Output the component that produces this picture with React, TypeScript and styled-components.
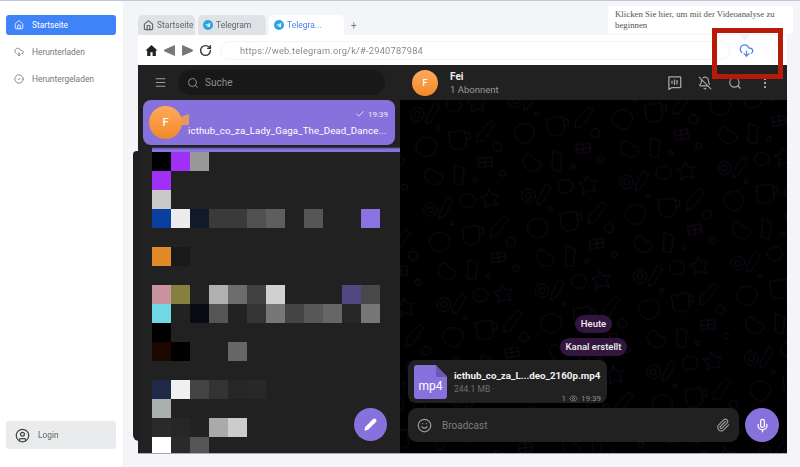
import React from "react";
import styled, { createGlobalStyle } from "styled-components";
import {
  Home, CloudDownload, CircleCheck, Menu, Search, Check, BellOff, MoreVertical,
  Eye, Smile, Paperclip, Mic, Pencil, RotateCw, CircleUser,
} from "lucide-react";

const Global = createGlobalStyle`
  html, body { margin: 0; padding: 0; width: 800px; height: 467px; overflow: hidden; background: #f3f5f8; }
  body { font-family: Roboto, "Liberation Sans", sans-serif; }
  #root { width: 800px; height: 467px; }
`;

const Page = styled.div`
  position: relative;
  display: flex;
  width: 800px;
  height: 467px;
  box-sizing: border-box;
  border-top: 1px solid #c2c6d6;
  filter: blur(0.4px);
`;

const Sidebar = styled.aside`
  width: 123px;
  flex: none;
  background: #fff;
  box-sizing: border-box;
  padding: 14px 7px 18px 6px;
  display: flex;
  flex-direction: column;
`;

const NavItem = styled.div<{ $active?: boolean }>`
  height: 20px;
  margin-bottom: 7px;
  border-radius: 3px;
  display: flex;
  align-items: center;
  gap: 8px;
  padding-left: 8px;
  font-size: 8.4px;
  color: ${(p) => (p.$active ? "#fff" : "#777")};
  background: ${(p) => (p.$active ? "#4083f8" : "transparent")};
`;

const LoginBtn = styled.div`
  margin-top: auto;
  height: 28px;
  background: #e9ebec;
  border-radius: 3px;
  display: flex;
  align-items: center;
  gap: 8px;
  padding-left: 9px;
  font-size: 8.4px;
  color: #666;
`;

const Main = styled.main`
  flex: 1;
  min-width: 0;
  box-sizing: border-box;
  padding: 14px 13px 13px 15px;
  display: flex;
  flex-direction: column;
`;

const Tabs = styled.div`
  height: 20px;
  display: flex;
  gap: 3px;
  align-items: stretch;
`;

const Tab = styled.div<{ $w: number; $active?: boolean }>`
  width: ${(p) => p.$w}px;
  box-sizing: border-box;
  border-radius: 5px 5px 0 0;
  display: flex;
  align-items: center;
  gap: 3px;
  padding-left: 5px;
  font-size: 8.5px;
  white-space: nowrap;
  color: ${(p) => (p.$active ? "#4a86f0" : "#666")};
  background: ${(p) => (p.$active ? "#fff" : "#dfe2e6")};
`;

const AddTab = styled.div`
  font-size: 10px;
  color: #777;
  align-self: center;
  margin-left: 4px;
`;

const Toolbar = styled.div`
  height: 30px;
  background: #fff;
  display: flex;
  align-items: center;
  padding-left: 7px;
  flex: none;
`;

const NavIcons = styled.div`
  display: flex;
  align-items: center;
  gap: 5px;
`;

const Address = styled.div`
  width: 510px;
  box-sizing: border-box;
  margin-left: 8px;
  height: 19px;
  border: 1px solid #f3f4f6;
  border-radius: 10px;
  display: flex;
  align-items: center;
  padding-left: 19px;
  font-size: 9.3px;
  letter-spacing: 0.2px;
  color: #8a8a8a;
`;

const AnalyzeBtn = styled.div`
  margin-left: 9px;
  color: #4a86e8;
  display: flex;
`;

const Telegram = styled.div`
  flex: 1;
  min-height: 0;
  display: flex;
  background: #212121;
  border-bottom: 1px solid #aaa;
`;

const ListCol = styled.div`
  width: 262px;
  flex: none;
  position: relative;
  background: #212121;
  display: flex;
  flex-direction: column;
  overflow: visible;
`;

const ListEdge = styled.div`
  position: absolute;
  left: -5px;
  top: 86px;
  bottom: 12px;
  width: 6px;
  background: #1f1f1f;
  border-radius: 5px 0 0 8px;
`;

const ListHead = styled.div`
  height: 35px;
  flex: none;
  display: flex;
  align-items: center;
  padding: 0 15px 0 16px;
  gap: 11px;
  color: #a0a0a0;
`;

const SearchBox = styled.div`
  flex: 1;
  height: 25px;
  border-radius: 13px;
  background: #181818;
  display: flex;
  align-items: center;
  gap: 6px;
  padding-left: 9px;
  font-size: 10px;
  color: #8e8e8e;
`;

const ChatRow = styled.div`
  margin: 0 5px;
  height: 45px;
  flex: none;
  position: relative;
  background: #8772dd;
  border-radius: 8px;
  color: #fff;
  display: flex;
  flex-direction: column;
  align-items: flex-end;
  padding: 7px 7px 0 45px;
  box-sizing: border-box;
`;

const RowTime = styled.div`
  display: flex;
  align-items: center;
  gap: 3px;
  font-size: 8px;
  color: #eee;
  height: 14px;
`;

const RowText = styled.div`
  align-self: flex-start;
  font-size: 9.7px;
  letter-spacing: 0.1px;
  white-space: nowrap;
  margin-top: 4px;
`;

const Avatar = styled.div<{ $size: number }>`
  width: ${(p) => p.$size}px;
  height: ${(p) => p.$size}px;
  border-radius: 50%;
  flex: none;
  background: linear-gradient(#ffa95c, #f08a28);
  color: #fff;
  display: flex;
  align-items: center;
  justify-content: center;
  font-size: ${(p) => Math.round(p.$size / 3)}px;
  font-weight: 500;
`;

const RowAvatar = styled(Avatar)`
  position: absolute;
  left: 6px;
  top: 6px;
`;

const AvatarFlag = styled.div`
  position: absolute;
  left: 37px;
  top: 14px;
  width: 9px;
  height: 11px;
  background: #e8985a;
  clip-path: polygon(100% 0, 100% 100%, 0 100%, 0 30%);
`;

const Strip = styled.div`
  margin: 1px 0 0 14px;
  height: 6px;
  background: linear-gradient(#222 0 1px, #8772dd 3px);
  flex: none;
`;

const Mosaic = styled.div`
  margin-left: 14px;
  display: grid;
  grid-template-columns: repeat(12, 19px);
  grid-auto-rows: 19px;
  flex: 1;
  min-height: 0;
  overflow: hidden;
`;

const Cell = styled.div<{ $c: string | null }>`
  background: ${(p) => p.$c ?? "transparent"};
`;

const Fab = styled.div`
  position: absolute;
  left: 216px;
  bottom: 12px;
  width: 33px;
  height: 33px;
  border-radius: 50%;
  background: #8772dd;
  color: #fff;
  display: flex;
  align-items: center;
  justify-content: center;
`;

const ChatCol = styled.div`
  flex: 1;
  min-width: 0;
  display: flex;
  flex-direction: column;
  background: #000;
`;

const ChatHead = styled.div`
  height: 35px;
  flex: none;
  background: #212121;
  display: flex;
  align-items: center;
  padding-left: 12px;
  color: #a8a8a8;
`;

const HeadText = styled.div`
  margin-left: 12px;
  flex: 1;
  display: flex;
  flex-direction: column;
  gap: 2px;
`;

const HeadName = styled.div`
  font-size: 10px;
  font-weight: 700;
  color: #eee;
`;

const HeadSub = styled.div`
  font-size: 9.5px;
  color: #9a9a9a;
`;

const HeadIcons = styled.div`
  display: flex;
  align-items: center;
  gap: 16px;
  padding-right: 15px;
`;

const ChatBody = styled.div`
  flex: 1;
  min-height: 0;
  position: relative;
  overflow: hidden;
  display: flex;
  flex-direction: column;
  align-items: flex-start;
  justify-content: flex-end;
  padding: 0 8px 11px 8px;
`;

const Doodles = styled.svg`
  position: absolute;
  inset: 0;
  width: 100%;
  height: 100%;
`;

const Pill = styled.div<{ $mb: number }>`
  position: relative;
  align-self: center;
  margin-bottom: ${(p) => p.$mb}px;
  padding: 0 6px;
  height: 18px;
  line-height: 18px;
  border-radius: 9px;
  background: #32163f;
  color: #eee;
  font-size: 9.5px;
  font-weight: 500;
`;

const Bubble = styled.div`
  position: relative;
  width: 199px;
  height: 43px;
  box-sizing: border-box;
  background: #212121;
  border-radius: 8px;
  display: flex;
  padding: 5px 6px;
  gap: 7px;
  margin-bottom: 5px;
`;

const Doc = styled.div`
  position: relative;
  width: 33px;
  height: 34px;
  flex: none;
  border-radius: 3px;
  background: #8772dd;
  clip-path: polygon(0 0, 66% 0, 100% 34%, 100% 100%, 0 100%);
  color: #fff;
  font-size: 12px;
  display: flex;
  align-items: flex-end;
  justify-content: center;
  padding-bottom: 6px;
  box-sizing: border-box;
`;

const DocFold = styled.div`
  position: absolute;
  right: 0;
  top: 0;
  width: 11px;
  height: 12px;
  background: #6a58b4;
  clip-path: polygon(0 0, 100% 100%, 0 100%);
`;

const DocInfo = styled.div`
  flex: 1;
  min-width: 0;
  display: flex;
  flex-direction: column;
  padding-top: 5px;
`;

const DocName = styled.div`
  font-size: 9.8px;
  font-weight: 700;
  color: #f0f0f0;
  white-space: nowrap;
`;

const DocSize = styled.div`
  font-size: 8.5px;
  color: #6f6f6f;
  margin-top: 3px;
`;

const DocMeta = styled.div`
  align-self: flex-end;
  display: flex;
  align-items: center;
  gap: 3px;
  font-size: 8px;
  color: #8e8e8e;
`;

const Composer = styled.div`
  position: relative;
  display: flex;
  align-self: stretch;
  gap: 6px;
`;

const InputBar = styled.div`
  flex: 1;
  height: 34px;
  border-radius: 9px;
  background: #212121;
  display: flex;
  align-items: center;
  padding: 0 9px 0 9px;
  gap: 10px;
  color: #9a9a9a;
  font-size: 10px;
`;

const InputText = styled.div`
  flex: 1;
  color: #7c7c7c;
`;

const MicBtn = styled.div`
  width: 34px;
  height: 34px;
  border-radius: 50%;
  background: #8772dd;
  color: #fff;
  flex: none;
  display: flex;
  align-items: center;
  justify-content: center;
`;

const Tooltip = styled.div`
  position: absolute;
  left: 608px;
  top: 5px;
  width: 185px;
  height: 28px;
  box-sizing: border-box;
  padding: 3px 7px;
  background: #fff;
  border-radius: 3px;
  font: 8.8px/11px "Liberation Serif", serif;
  color: #555;
  &::after {
    content: "";
    position: absolute;
    left: 131px;
    top: 28px;
    border: 6px solid transparent;
    border-top: 7px solid #f1f2f5;
    border-bottom: 0;
  }
`;

const RedBox = styled.div`
  position: absolute;
  left: 712px;
  top: 27px;
  width: 71px;
  height: 51px;
  box-sizing: border-box;
  border: 5px solid #b81a08;
`;

const TgIcon = () => (
  <svg width="10" height="10" viewBox="0 0 24 24">
    <circle cx="12" cy="12" r="12" fill="#2aa3e0" />
    <path d="M5 12l13-5-2 11-4-3-2 2v-3l6-5-8 4z" fill="#fff" />
  </svg>
);

const HomeFilled = ({ size, color }: { size: number; color: string }) => (
  <svg width={size} height={size} viewBox="0 0 24 24" fill={color}>
    <path d="M12 2 1 12h3v10h6v-7h4v7h6V12h3z" />
  </svg>
);

const Tri = ({ left }: { left?: boolean }) => (
  <svg width="13" height="13" viewBox="0 0 24 24" fill="#777">
    <path d={left ? "M22 2v20L3 14a2.500 2.500 0 0 1 0-4z" : "M2 2v20l19-8a2.500 2.500 0 0 0 0-4z"} />
  </svg>
);

const StreamIcon = () => (
  <svg width="15" height="15" viewBox="0 0 24 24" fill="none" stroke="currentColor" strokeWidth="2">
    <path d="M3 3h18a1 1 0 0 1 1 1v15a1 1 0 0 1-1 1H8l-5 3z" strokeLinejoin="round" />
    <path d="M12 7v9M16 8v7M8 9v5" />
  </svg>
);

const _ = null;
const rows: (string | null)[][] = [
  ["#000", "#a030f8", "#999"],
  ["#a030f8"],
  ["#c8c9c8"],
  ["#0a3fa0", "#ececee", "#101a2a", "#3a3a3a", "#3a3a3a", "#505250", "#5e5e5e", _, "#555", _, _, "#8a72e0"],
  [],
  ["#e08a28", "#191919"],
  [],
  ["#c8939f", "#858040", _, "#b0b0b0", "#6c6c6c", "#404040", "#d0d0d0", _, _, _, "#504880", "#484848"],
  ["#70d8e4", "#222", "#0a0a14", "#555", "#222", "#353535", "#777", "#444", "#585858", "#666", "#262626", "#777"],
  ["#000"],
  ["#1c0800", "#000", _, _, "#666"],
  [],
  ["#202a48", "#f0f0f2", "#444", "#333", "#262626", "#282828"],
  ["#aab0ae"],
  ["#2a2a2a", "#262626", _, "#aaa", "#ccc"],
  ["#fff", "#2a2a2a", "#555"],
];
const cells = rows.flatMap((r) => Array.from({ length: 12 }, (_v, i) => r[i] ?? null));

export default function App() {
  return (
    <Page>
      <Global />
      <Sidebar>
        <NavItem $active><Home size={10} />Startseite</NavItem>
        <NavItem><CloudDownload size={10} />Herunterladen</NavItem>
        <NavItem><CircleCheck size={10} />Heruntergeladen</NavItem>
        <LoginBtn><CircleUser size={15} color="#444" />Login</LoginBtn>
      </Sidebar>
      <Main>
        <Tabs>
          <Tab $w={57}><Home size={11} color="#666" strokeWidth={2.5} />Startseite</Tab>
          <Tab $w={68}><TgIcon />Telegram</Tab>
          <Tab $w={75} $active><TgIcon />Telegra...</Tab>
          <AddTab>+</AddTab>
        </Tabs>
        <Toolbar>
          <NavIcons>
            <HomeFilled size={13} color="#222" />
            <Tri left />
            <Tri />
            <RotateCw size={13} color="#333" strokeWidth={2.5} />
          </NavIcons>
          <Address>https://web.telegram.org/k/#-2940787984</Address>
          <AnalyzeBtn><CloudDownload size={15} /></AnalyzeBtn>
        </Toolbar>
        <Telegram>
          <ListCol>
            <ListEdge />
            <ListHead>
              <Menu size={13} />
              <SearchBox><Search size={12} />Suche</SearchBox>
            </ListHead>
            <ChatRow>
              <AvatarFlag />
              <RowAvatar $size={33}>F</RowAvatar>
              <RowTime><Check size={10} />19:39</RowTime>
              <RowText>icthub_co_za_Lady_Gaga_The_Dead_Dance...</RowText>
            </ChatRow>
            <Strip />
            <Mosaic>
              {cells.map((c, i) => <Cell key={i} $c={c} />)}
            </Mosaic>
            <Fab><Pencil size={13} fill="#fff" /></Fab>
          </ListCol>
          <ChatCol>
            <ChatHead>
              <Avatar $size={26}>F</Avatar>
              <HeadText>
                <HeadName>Fei</HeadName>
                <HeadSub>1 Abonnent</HeadSub>
              </HeadText>
              <HeadIcons>
                <StreamIcon />
                <BellOff size={14} />
                <Search size={14} />
                <MoreVertical size={14} />
              </HeadIcons>
            </ChatHead>
            <ChatBody>
              <Doodles>
                <defs>
                  <pattern id="doodle" width="132" height="128" patternUnits="userSpaceOnUse" patternTransform="scale(0.75) rotate(-8)">
                    <g fill="none" stroke="#26122e" strokeWidth="0.7">
                      <circle cx="20" cy="22" r="9" />
                      <circle cx="20" cy="22" r="4" />
                      <path d="M45 10l6 6-14 18-7 2 1-7z" />
                      <path d="M70 8c8 0 12 6 10 12s-14 8-18 2 0-14 8-14z" />
                      <path d="M100 6l4 8 9 1-6 6 2 9-9-4-8 4 2-9-6-6 9-1z" />
                      <path d="M14 60c6-8 18-8 24 0s-4 20-12 20-18-12-12-20z" />
                      <path d="M58 52h22v16a8 8 0 0 1-8 8h-6a8 8 0 0 1-8-8zM80 56h6v8h-6" />
                      <path d="M96 60l20-16 5 5-18 20-9 1z" />
                      <circle cx="120" cy="80" r="6" />
                      <path d="M20 100c4-6 10-6 12 0s10 4 10 10-8 10-14 8-12-12-8-18z" />
                      <path d="M60 96l12 6-6 22-10-4z" />
                      <path d="M92 92h18v12H92zM92 98h18M101 92v12" />
                      <circle cx="122" cy="116" r="4" />
                      <circle cx="84" cy="120" r="3" />
                      <circle cx="46" cy="44" r="2.500" />
                    </g>
                  </pattern>
                </defs>
                <rect width="100%" height="100%" fill="url(#doodle)" />
              </Doodles>
              <Pill $mb={5}>Heute</Pill>
              <Pill $mb={4}>Kanal erstellt</Pill>
              <Bubble>
                <Doc><DocFold />mp4</Doc>
                <DocInfo>
                  <DocName>icthub_co_za_L...deo_2160p.mp4</DocName>
                  <DocSize>244.1 MB ·</DocSize>
                  <DocMeta>1 <Eye size={9} /> 19:39</DocMeta>
                </DocInfo>
              </Bubble>
              <Composer>
                <InputBar>
                  <Smile size={15} />
                  <InputText>Broadcast</InputText>
                  <Paperclip size={14} />
                </InputBar>
                <MicBtn><Mic size={15} /></MicBtn>
              </Composer>
            </ChatBody>
          </ChatCol>
        </Telegram>
      </Main>
      <Tooltip>Klicken Sie hier, um mit der Videoanalyse zu beginnen</Tooltip>
      <RedBox />
    </Page>
  );
}
